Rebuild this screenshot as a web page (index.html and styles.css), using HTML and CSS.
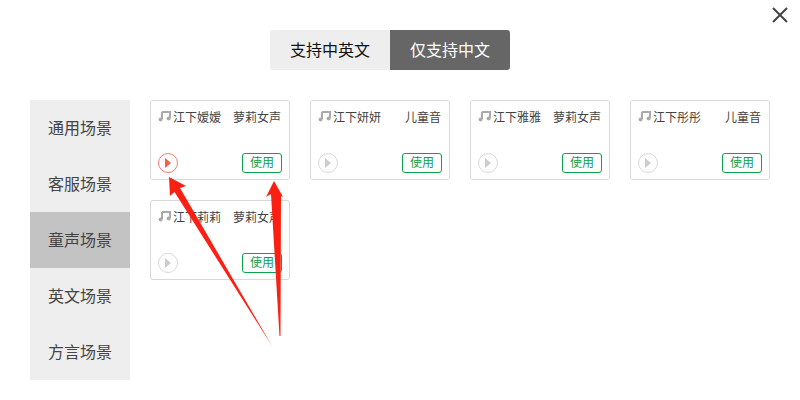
FILE: index.html
```html
<!DOCTYPE html>
<html>
	<head>
		<meta charset="UTF-8">
		<title></title>
		<link rel="stylesheet" href="styles.css">
	</head>
	<body>
		<div id="box">
			<svg class="close" width="18" height="18" viewBox="0 0 18 18"><path d="M2 2L16 16M16 2L2 16" stroke="#444" stroke-width="2" fill="none"/></svg>
			<div class="tabs">
				<a href="javascript:;">支持中英文</a>
				<a href="javascript:;" class="active">仅支持中文</a>
			</div>
			<div class="main">
				<ul class="side">
					<li>通用场景</li>
					<li>客服场景</li>
					<li class="active">童声场景</li>
					<li>英文场景</li>
					<li>方言场景</li>
				</ul>
				<div class="cards">
					<div class="card">
						<div class="top">
							<svg class="note" width="14" height="12" viewBox="0 0 14 12"><path d="M4 2H12V8M4 2V9" stroke="#aaa" stroke-width="2" fill="none"/><circle cx="2.6" cy="9.4" r="2" fill="#aaa"/><circle cx="10.6" cy="8.4" r="2" fill="#aaa"/></svg>
							<span class="name">江下嫒嫒</span>
							<span class="kind">萝莉女声</span>
						</div>
						<div class="bottom">
							<span class="play on"></span>
							<a href="javascript:;" class="use">使用</a>
						</div>
					</div>
					<div class="card">
						<div class="top">
							<svg class="note" width="14" height="12" viewBox="0 0 14 12"><path d="M4 2H12V8M4 2V9" stroke="#aaa" stroke-width="2" fill="none"/><circle cx="2.6" cy="9.4" r="2" fill="#aaa"/><circle cx="10.6" cy="8.4" r="2" fill="#aaa"/></svg>
							<span class="name">江下妍妍</span>
							<span class="kind">儿童音</span>
						</div>
						<div class="bottom">
							<span class="play"></span>
							<a href="javascript:;" class="use">使用</a>
						</div>
					</div>
					<div class="card">
						<div class="top">
							<svg class="note" width="14" height="12" viewBox="0 0 14 12"><path d="M4 2H12V8M4 2V9" stroke="#aaa" stroke-width="2" fill="none"/><circle cx="2.6" cy="9.4" r="2" fill="#aaa"/><circle cx="10.6" cy="8.4" r="2" fill="#aaa"/></svg>
							<span class="name">江下雅雅</span>
							<span class="kind">萝莉女声</span>
						</div>
						<div class="bottom">
							<span class="play"></span>
							<a href="javascript:;" class="use">使用</a>
						</div>
					</div>
					<div class="card">
						<div class="top">
							<svg class="note" width="14" height="12" viewBox="0 0 14 12"><path d="M4 2H12V8M4 2V9" stroke="#aaa" stroke-width="2" fill="none"/><circle cx="2.6" cy="9.4" r="2" fill="#aaa"/><circle cx="10.6" cy="8.4" r="2" fill="#aaa"/></svg>
							<span class="name">江下彤彤</span>
							<span class="kind">儿童音</span>
						</div>
						<div class="bottom">
							<span class="play"></span>
							<a href="javascript:;" class="use">使用</a>
						</div>
					</div>
					<div class="card">
						<div class="top">
							<svg class="note" width="14" height="12" viewBox="0 0 14 12"><path d="M4 2H12V8M4 2V9" stroke="#aaa" stroke-width="2" fill="none"/><circle cx="2.6" cy="9.4" r="2" fill="#aaa"/><circle cx="10.6" cy="8.4" r="2" fill="#aaa"/></svg>
							<span class="name">江下莉莉</span>
							<span class="kind">萝莉女声</span>
						</div>
						<div class="bottom">
							<span class="play"></span>
							<a href="javascript:;" class="use">使用</a>
						</div>
					</div>
				</div>
			</div>
			<!-- arrows drawn over the cards -->
			<svg class="arrows" width="800" height="400" viewBox="0 0 800 400">
				<path d="M169 177L186 186L180 188L272 346L174.500 192L170 196Z" fill="#fb2012"/>
				<path d="M274 181L283 197L281 196L280.500 336L279.500 336L271 194L266 197Z" fill="#fb2012"/>
			</svg>
		</div>
	</body>
</html>
```
FILE: styles.css
```css
*{
    margin: 0;
    padding: 0;
    box-sizing: border-box;
}
body{
    background: #fff;
    font-family: "Liberation Sans", "Noto Sans CJK SC", sans-serif;
}
a{
    text-decoration: none;
}
#box{
    position: relative;
    width: 800px;
    height: 400px;
    padding: 30px 30px 0;
    overflow: hidden;
}
.close{
    position: absolute;
    top: 6px;
    right: 11px;
}
.arrows{
    position: absolute;
    top: 0;
    left: 0;
}
.tabs{
    display: flex;
    justify-content: center;
    padding-right: 20px;
}
.tabs a{
    width: 120px;
    height: 40px;
    line-height: 41px;
    text-align: center;
    font-size: 16px;
    color: #111;
    background: #eee;
    border-radius: 3px 0 0 3px;
}
.tabs a.active{
    color: #fff;
    background: #666;
    border-radius: 0 3px 3px 0;
}
.main{
    display: flex;
    gap: 20px;
    margin-top: 30px;
}
.side{
    list-style: none;
    width: 100px;
    background: #eee;
}
.side li{
    height: 56px;
    line-height: 58px;
    text-align: center;
    font-size: 16px;
    color: #444;
}
.side li.active{
    background: #c3c3c3;
}
.cards{
    display: grid;
    grid-template-columns: repeat(4, 140px);
    grid-auto-rows: 80px;
    gap: 20px;
    align-content: start;
}
.card{
    display: flex;
    flex-direction: column;
    justify-content: space-between;
    height: 80px;
    padding: 7px 8px 6px 7px;
    border: 1px solid #d9d9d9;
    border-radius: 3px;
}
.top{
    display: flex;
    align-items: center;
    height: 16px;
    font-size: 12px;
    color: #444;
}
.note{
    flex: none;
    margin-right: 1px;
}
.kind{
    margin-left: auto;
}
.bottom{
    display: flex;
    align-items: center;
    justify-content: space-between;
    margin-right: -1px;
}
.play{
    position: relative;
    width: 20px;
    height: 20px;
    border: 1px solid #d9d9d9;
    border-radius: 50%;
}
.play:after{
    content: "";
    position: absolute;
    top: 4px;
    left: 6px;
    border-left: 6px solid #ccc;
    border-top: 5px solid transparent;
    border-bottom: 5px solid transparent;
}
.play.on{
    border-color: #fb7a6e;
}
.play.on:after{
    border-left-color: #fb5a45;
}
.use{
    width: 40px;
    height: 20px;
    line-height: 18px;
    text-align: center;
    font-size: 12px;
    color: #0aa24a;
    border: 1px solid #0aa24a;
    border-radius: 3px;
}
```
